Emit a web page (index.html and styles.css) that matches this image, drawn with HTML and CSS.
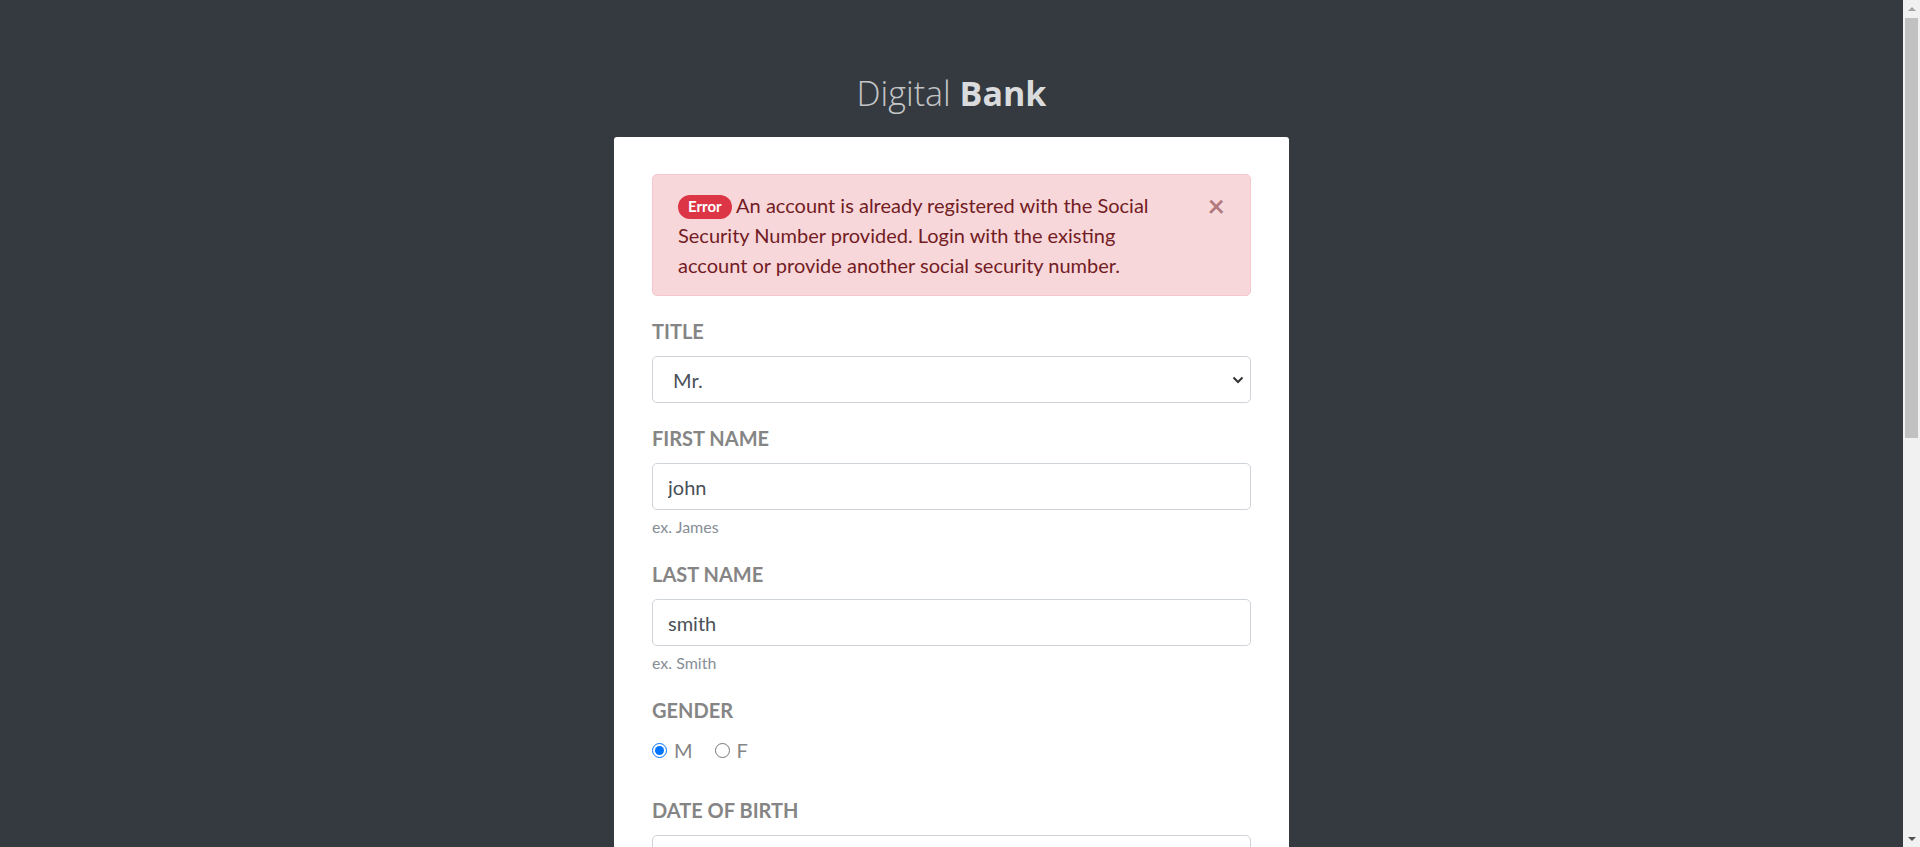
FILE: index.html
```html
<!DOCTYPE html>
<html lang="en">
<head>
<meta charset="utf-8">
<title>Digital Bank</title>
<link rel="stylesheet" href="styles.css">
</head>
<body>
<div class="viewport">
<main class="page">
  <h1 class="brand"><span class="brand-light">Digital</span> <span class="brand-bold">Bank</span></h1>
  <section class="card">
    <div class="alert">
      <span class="badge">Error</span> An account is already registered with the Social Security Number provided. Login with the existing account or provide another social security number.
      <button class="close" type="button" aria-label="Close">&times;</button>
    </div>
    <form class="form">
      <div class="group">
        <label class="label" for="title">Title</label>
        <select class="control select" id="title">
          <option>Mr.</option>
          <option>Mrs.</option>
          <option>Ms.</option>
        </select>
      </div>
      <div class="group">
        <label class="label" for="first">First Name</label>
        <input class="control" id="first" type="text" value="john">
        <small class="hint">ex. James</small>
      </div>
      <div class="group">
        <label class="label" for="last">Last Name</label>
        <input class="control" id="last" type="text" value="smith">
        <small class="hint">ex. Smith</small>
      </div>
      <div class="group group-gender">
        <span class="label">Gender</span>
        <div class="radios">
          <label class="radio"><input type="radio" name="gender" checked> M</label>
          <label class="radio"><input type="radio" name="gender"> F</label>
        </div>
      </div>
      <div class="group">
        <label class="label" for="dob">Date of Birth</label>
        <input class="control" id="dob" type="text" placeholder="mm/dd/yyyy">
        <small class="hint">ex. 12/01/1980</small>
      </div>
      <div class="group">
        <label class="label" for="ssn">Social Security Number</label>
        <input class="control" id="ssn" type="text" placeholder="###-##-####">
        <small class="hint">ex. 123-45-6789</small>
      </div>
      <div class="group">
        <label class="label" for="email">Email Address</label>
        <input class="control" id="email" type="text" placeholder="jsmith@demo.io">
      </div>
      <div class="group">
        <label class="label" for="pw">Password</label>
        <input class="control" id="pw" type="password">
      </div>
      <div class="group">
        <label class="label" for="pw2">Confirm Password</label>
        <input class="control" id="pw2" type="password">
      </div>
      <div class="group">
        <label class="radio"><input type="checkbox"> I agree to the Terms and Policy</label>
      </div>
      <button class="btn" type="button">Next</button>
      <p class="signin">Already have an account? <a href="#">Sign In</a></p>
    </form>
  </section>
</main>
</div>
<div class="rail" aria-hidden="true">
  <div class="rail-btn"><span class="tri tri-up"></span></div>
  <div class="rail-track"><div class="rail-thumb"></div></div>
  <div class="rail-btn"><span class="tri tri-down"></span></div>
</div>
</body>
</html>
```
FILE: styles.css
```css
html, body {
  margin: 0;
  padding: 0;
  height: 100%;
  overflow: hidden;
}
body {
  display: flex;
  background: #343a40;
  font-family: "Segoe UI", Lato, "Noto Sans", sans-serif;
  font-size: 20px;
  line-height: 30px;
  color: #212529;
}
.viewport {
  flex: 1;
  height: 100%;
  overflow-y: auto;
}
.rail {
  width: 17px;
  flex: none;
  height: 100%;
  background: #f1f1f1;
  display: flex;
  flex-direction: column;
}
.rail-btn {
  height: 17px;
  display: flex;
  align-items: center;
  justify-content: center;
}
.tri {
  width: 0;
  height: 0;
  border-left: 4px solid transparent;
  border-right: 4px solid transparent;
}
.tri-up {
  border-bottom: 4px solid #a3a3a3;
}
.tri-down {
  border-top: 4px solid #505050;
}
.rail-track {
  flex: 1;
  padding: 1px 2px;
}
.rail-thumb {
  height: 420px;
  background: #c1c1c1;
}
.page {
  width: 675px;
  margin: 0 auto;
  padding: 74px 0 600px;
}
.brand {
  margin: 0 0 25px;
  font-family: "Open Sans", sans-serif;
  font-size: 34px;
  line-height: 38px;
  text-align: center;
  color: #c3c4c6;
  font-weight: 300;
}
.brand-bold {
  font-weight: 700;
  color: #dadbdc;
}
.card {
  background: #fff;
  border-radius: 3px;
  padding: 37px 38px 60px;
}
.alert {
  position: relative;
  background: #f8d7da;
  border: 1px solid #f5c6cb;
  border-radius: 5px;
  color: #721c24;
  padding: 15px 80px 15px 25px;
  margin-bottom: 20px;
}
.badge {
  display: inline-block;
  background: #dc3545;
  color: #fff;
  font-size: 15px;
  font-weight: 700;
  line-height: 1;
  padding: 4px 10px 5px;
  border-radius: 12px;
  vertical-align: 1px;
}
.close {
  position: absolute;
  top: 0;
  right: 0;
  padding: 15px 25px;
  border: 0;
  background: transparent;
  font-family: inherit;
  font-size: 30px;
  font-weight: 700;
  line-height: 30px;
  color: #721c24;
  opacity: 0.5;
  text-shadow: 0 1px 0 #fff;
}
.group {
  margin-bottom: 20px;
}
.label {
  display: block;
  margin-bottom: 10px;
  font-weight: 700;
  text-transform: uppercase;
  color: #858585;
}
.control {
  display: block;
  box-sizing: border-box;
  width: 100%;
  height: 47px;
  padding: 7px 15px;
  border: 1px solid #ced4da;
  border-radius: 5px;
  background: #fff;
  font-family: inherit;
  font-size: 20px;
  line-height: 30px;
  color: #495057;
}
.control::placeholder {
  color: #6c757d;
}
.select {
  appearance: none;
  -webkit-appearance: none;
  padding-left: 20px;
  background-image: url("data:image/svg+xml,%3Csvg xmlns='http://www.w3.org/2000/svg' width='12' height='8' viewBox='0 0 12 8'%3E%3Cpath d='M1.5 1.5l4.5 4.5 4.5-4.5' fill='none' stroke='%23333' stroke-width='2'/%3E%3C/svg%3E");
  background-repeat: no-repeat;
  background-position: right 6px center;
  background-size: 12px 8px;
}
.hint {
  display: block;
  margin-top: 5px;
  font-size: 16px;
  line-height: 24px;
  color: #868e96;
}
.group-gender {
  margin-bottom: 30px;
}
.radios {
  display: flex;
  gap: 22px;
}
.radio {
  display: inline-flex;
  align-items: center;
  color: #858585;
}
.radio input {
  width: 15px;
  height: 15px;
  margin: 0 7px 0 0;
  accent-color: #0075ff;
}
.btn {
  display: block;
  width: 100%;
  height: 47px;
  border: 1px solid #007bff;
  border-radius: 5px;
  background: #007bff;
  color: #fff;
  font-family: inherit;
  font-size: 20px;
}
.signin {
  text-align: center;
  color: #858585;
  margin: 25px 0 0;
}
.signin a {
  color: #007bff;
  text-decoration: none;
}
```
